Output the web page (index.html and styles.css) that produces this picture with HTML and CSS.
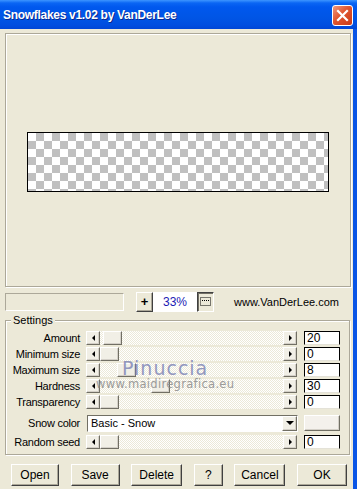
FILE: index.html
```html
<!DOCTYPE html>
<html lang="en">
<head>
  <meta charset="UTF-8" />
  <title>Snowflakes v1.02 by VanDerLee</title>
  <link rel="stylesheet" href="styles.css">
</head>
<body>
<div class="window">
  <div class="titlebar">
    <span class="title">Snowflakes v1.02 by VanDerLee</span>
    <button class="close" title="Close">
      <svg width="13" height="13" viewBox="0 0 13 13"><path d="M2 2 L11 11 M11 2 L2 11" stroke="#fff" stroke-width="2.2" stroke-linecap="square"/></svg>
    </button>
  </div>

  <div class="client">
    <div class="preview">
      <div class="canvas"></div>
    </div>

    <div class="toolbar">
      <div class="progress"></div>
      <div class="zoom-group">
        <button class="tool">+</button>
        <span class="zoom-value">33%</span>
        <button class="tool pressed">
          <svg width="11" height="9" viewBox="0 0 11 9"><rect x="0.5" y="0.5" width="10" height="8" fill="none" stroke="#000" stroke-dasharray="1 1"/><line x1="2" y1="3.5" x2="9" y2="3.5" stroke="#000" stroke-dasharray="1 1"/></svg>
        </button>
      </div>
      <span class="site">www.VanDerLee.com</span>
    </div>

    <div class="group">
      <span class="group-label">Settings</span>
      <div class="watermark">
        <span class="wm-name">Pinuccia</span>
        <span class="wm-url">www.maidiregrafica.eu</span>
      </div>

      <div class="row">
        <span class="label">Amount</span>
        <div class="scroll"><span class="arrow left"></span><div class="track"><span class="thumb" style="margin-left:3px"></span></div><span class="arrow right"></span></div>
        <span class="field">20</span>
      </div>
      <div class="row">
        <span class="label">Minimum size</span>
        <div class="scroll"><span class="arrow left"></span><div class="track"><span class="thumb" style="margin-left:0px"></span></div><span class="arrow right"></span></div>
        <span class="field">0</span>
      </div>
      <div class="row">
        <span class="label">Maximum size</span>
        <div class="scroll"><span class="arrow left"></span><div class="track"><span class="thumb" style="margin-left:17px"></span></div><span class="arrow right"></span></div>
        <span class="field">8</span>
      </div>
      <div class="row">
        <span class="label">Hardness</span>
        <div class="scroll"><span class="arrow left"></span><div class="track"><span class="thumb" style="margin-left:51px"></span></div><span class="arrow right"></span></div>
        <span class="field">30</span>
      </div>
      <div class="row">
        <span class="label">Transparency</span>
        <div class="scroll"><span class="arrow left"></span><div class="track"><span class="thumb" style="margin-left:0px"></span></div><span class="arrow right"></span></div>
        <span class="field">0</span>
      </div>
      <div class="row row-select">
        <span class="label">Snow color</span>
        <div class="select"><span class="select-text">Basic - Snow</span><span class="arrow down"></span></div>
        <button class="swatch"></button>
      </div>
      <div class="row row-seed">
        <span class="label">Random seed</span>
        <div class="scroll"><span class="arrow left"></span><div class="track"><span class="thumb" style="margin-left:0px"></span></div><span class="arrow right"></span></div>
        <span class="field">0</span>
      </div>
    </div>

    <div class="actions">
      <button class="btn" style="width:48px">Open</button>
      <button class="btn" style="width:49px">Save</button>
      <button class="btn" style="width:51px">Delete</button>
      <button class="btn" style="width:29px">?</button>
      <button class="btn" style="width:51px">Cancel</button>
      <button class="btn" style="width:50px">OK</button>
    </div>
  </div>
</div>
</body>
</html>
```

FILE: styles.css
```css
body {
  margin: 0;
  font-family: "Liberation Sans", Arial, sans-serif;
  font-size: 11px;
  color: #000;
  background: #ece9d8;
}

button {
  font-family: inherit;
  font-size: 11px;
  color: #000;
  padding: 0;
  margin: 0;
}

.window {
  width: 357px;
  height: 489px;
  display: flex;
  flex-direction: column;
  overflow: hidden;
}

.titlebar {
  height: 29px;
  flex: none;
  display: flex;
  align-items: flex-start;
  justify-content: space-between;
  padding: 0 4px 0 3px;
  box-sizing: border-box;
  background: linear-gradient(#3d95ff 0, #0a66f4 3px, #0058ee 7px, #0055e5 18px, #004ee0 25px, #0046d6 29px);
}

.title {
  margin-top: 8px;
  color: #fff;
  font-weight: bold;
  font-size: 12px;
  letter-spacing: -0.3px;
  text-shadow: 1px 1px #0b2a8f;
}

.close {
  margin-top: 5px;
  width: 21px;
  height: 21px;
  border: 1px solid #fff;
  border-radius: 3px;
  background: linear-gradient(135deg, #f09a80, #e0552f 45%, #c83a18);
  display: flex;
  align-items: center;
  justify-content: center;
}

.client {
  flex: 1;
  border-right: 4px solid #0a55e6;
  padding: 4px 2px 0 5px;
  display: flex;
  flex-direction: column;
}

.preview {
  height: 254px;
  flex: none;
  box-sizing: border-box;
  border: 1px solid #aca899;
  box-shadow: inset 1px 1px #fff, 1px 1px #fff;
  display: flex;
  align-items: center;
  justify-content: center;
  padding-top: 4px;
}

.canvas {
  width: 302px;
  height: 60px;
  box-sizing: border-box;
  border: 1px solid #000;
  background: repeating-conic-gradient(#c0c0c0 0 25%, #fff 0 50%) 0 0 / 16px 16px;
}

.toolbar {
  margin-top: 4px;
  height: 21px;
  flex: none;
  display: flex;
  align-items: center;
}

.progress {
  width: 119px;
  height: 18px;
  box-sizing: border-box;
  border: 1px solid;
  border-color: #aca899 #fff #fff #aca899;
}

.zoom-group {
  margin-left: 12px;
  display: flex;
  height: 20px;
}

.tool {
  width: 17px;
  height: 20px;
  box-sizing: border-box;
  background: #ece9d8;
  border: 1px solid;
  border-color: #fff #404040 #404040 #fff;
  box-shadow: inset -1px -1px #aca899;
  font-size: 13px;
  font-weight: bold;
  line-height: 16px;
  display: flex;
  align-items: center;
  justify-content: center;
}

.tool.pressed {
  border-color: #404040 #fff #fff #404040;
  box-shadow: inset 1px 1px #716f64;
}

.zoom-value {
  width: 44px;
  height: 20px;
  background: #fff;
  color: #1b1bb4;
  text-align: center;
  line-height: 20px;
  font-size: 12px;
}

.site {
  margin-left: 20px;
}

.group {
  position: relative;
  margin: 8px 1px 0 0;
  height: 135px;
  flex: none;
  box-sizing: border-box;
  border: 1px solid #aca899;
  box-shadow: inset 1px 1px #fff, 1px 1px #fff;
}

.group-label {
  display: block;
  width: max-content;
  margin: -7px 0 3px 5px;
  padding: 0 2px;
  line-height: 13px;
  background: #ece9d8;
}

.watermark {
  position: absolute;
  left: 90px;
  top: 37px;
  display: flex;
  flex-direction: column;
  align-items: center;
  pointer-events: none;
}

.wm-name {
  font-family: "DejaVu Sans", sans-serif;
  font-size: 19px;
  line-height: 20px;
  color: #8288b8;
  opacity: 0.85;
  letter-spacing: 1px;
}

.wm-url {
  font-family: "DejaVu Sans", sans-serif;
  font-size: 11.5px;
  line-height: 13px;
  letter-spacing: 0.3px;
  color: #8c8c8c;
  opacity: 0.85;
}

.row {
  display: flex;
  align-items: center;
  height: 16px;
}

.label {
  width: 74px;
  margin-right: 6px;
  text-align: right;
  white-space: nowrap;
  letter-spacing: -0.25px;
}

.scroll {
  width: 211px;
  height: 14px;
  display: flex;
}

.arrow {
  width: 14px;
  height: 14px;
  flex: none;
  box-sizing: border-box;
  background: #f1efe6;
  border: 1px solid;
  border-color: #fff #716f64 #716f64 #fff;
  box-shadow: inset -1px -1px #d4d0c8;
  display: flex;
  align-items: center;
  justify-content: center;
}

.arrow::before {
  content: "";
  width: 0;
  height: 0;
  border-style: solid;
  border-color: transparent;
}

.arrow.left::before {
  border-width: 3px 3px 3px 0;
  border-right-color: #000;
}

.arrow.right::before {
  border-width: 3px 0 3px 3px;
  border-left-color: #000;
}

.arrow.down::before {
  border-width: 4px 4px 0 4px;
  border-top-color: #000;
}

.track {
  flex: 1;
  display: flex;
  background: repeating-conic-gradient(#ece9d8 0 25%, #fff 0 50%) 0 0 / 2px 2px;
}

.thumb {
  width: 19px;
  height: 14px;
  box-sizing: border-box;
  background: #f1efe6;
  border: 1px solid;
  border-color: #fff #716f64 #716f64 #fff;
  box-shadow: inset -1px -1px #d4d0c8;
}

.field {
  width: 36px;
  height: 14px;
  margin-left: 7px;
  box-sizing: border-box;
  background: #fff;
  border: 1px solid;
  border-color: #000 #000 #e4e2d8 #000;
  padding-left: 2px;
  font-size: 12px;
  line-height: 12px;
}

.row-select {
  height: 18px;
  margin-top: 4px;
}

.row-seed {
  margin-top: 2px;
}

.select {
  width: 211px;
  height: 17px;
  margin-left: 1px;
  margin-right: -1px;
  box-sizing: border-box;
  background: #fff;
  border: 1px solid;
  border-color: #716f64 #fff #fff #716f64;
  display: flex;
  align-items: center;
  justify-content: space-between;
}

.select-text {
  padding-left: 3px;
}

.select .arrow {
  width: 15px;
  height: 15px;
}

.swatch {
  width: 36px;
  height: 16px;
  margin-left: 7px;
  box-sizing: border-box;
  background: #f4f1ec;
  border: 1px solid;
  border-color: #fff #716f64 #716f64 #fff;
  box-shadow: inset -1px -1px #d4d0c8;
}

.actions {
  margin-top: 9px;
  padding: 0 4px 0 6px;
  display: flex;
  justify-content: space-between;
}

.btn {
  height: 22px;
  box-sizing: border-box;
  background: #ece9d8;
  border: 1px solid;
  border-color: #fff #404040 #404040 #fff;
  box-shadow: inset -1px -1px #aca899;
  font-size: 12px;
}
```
